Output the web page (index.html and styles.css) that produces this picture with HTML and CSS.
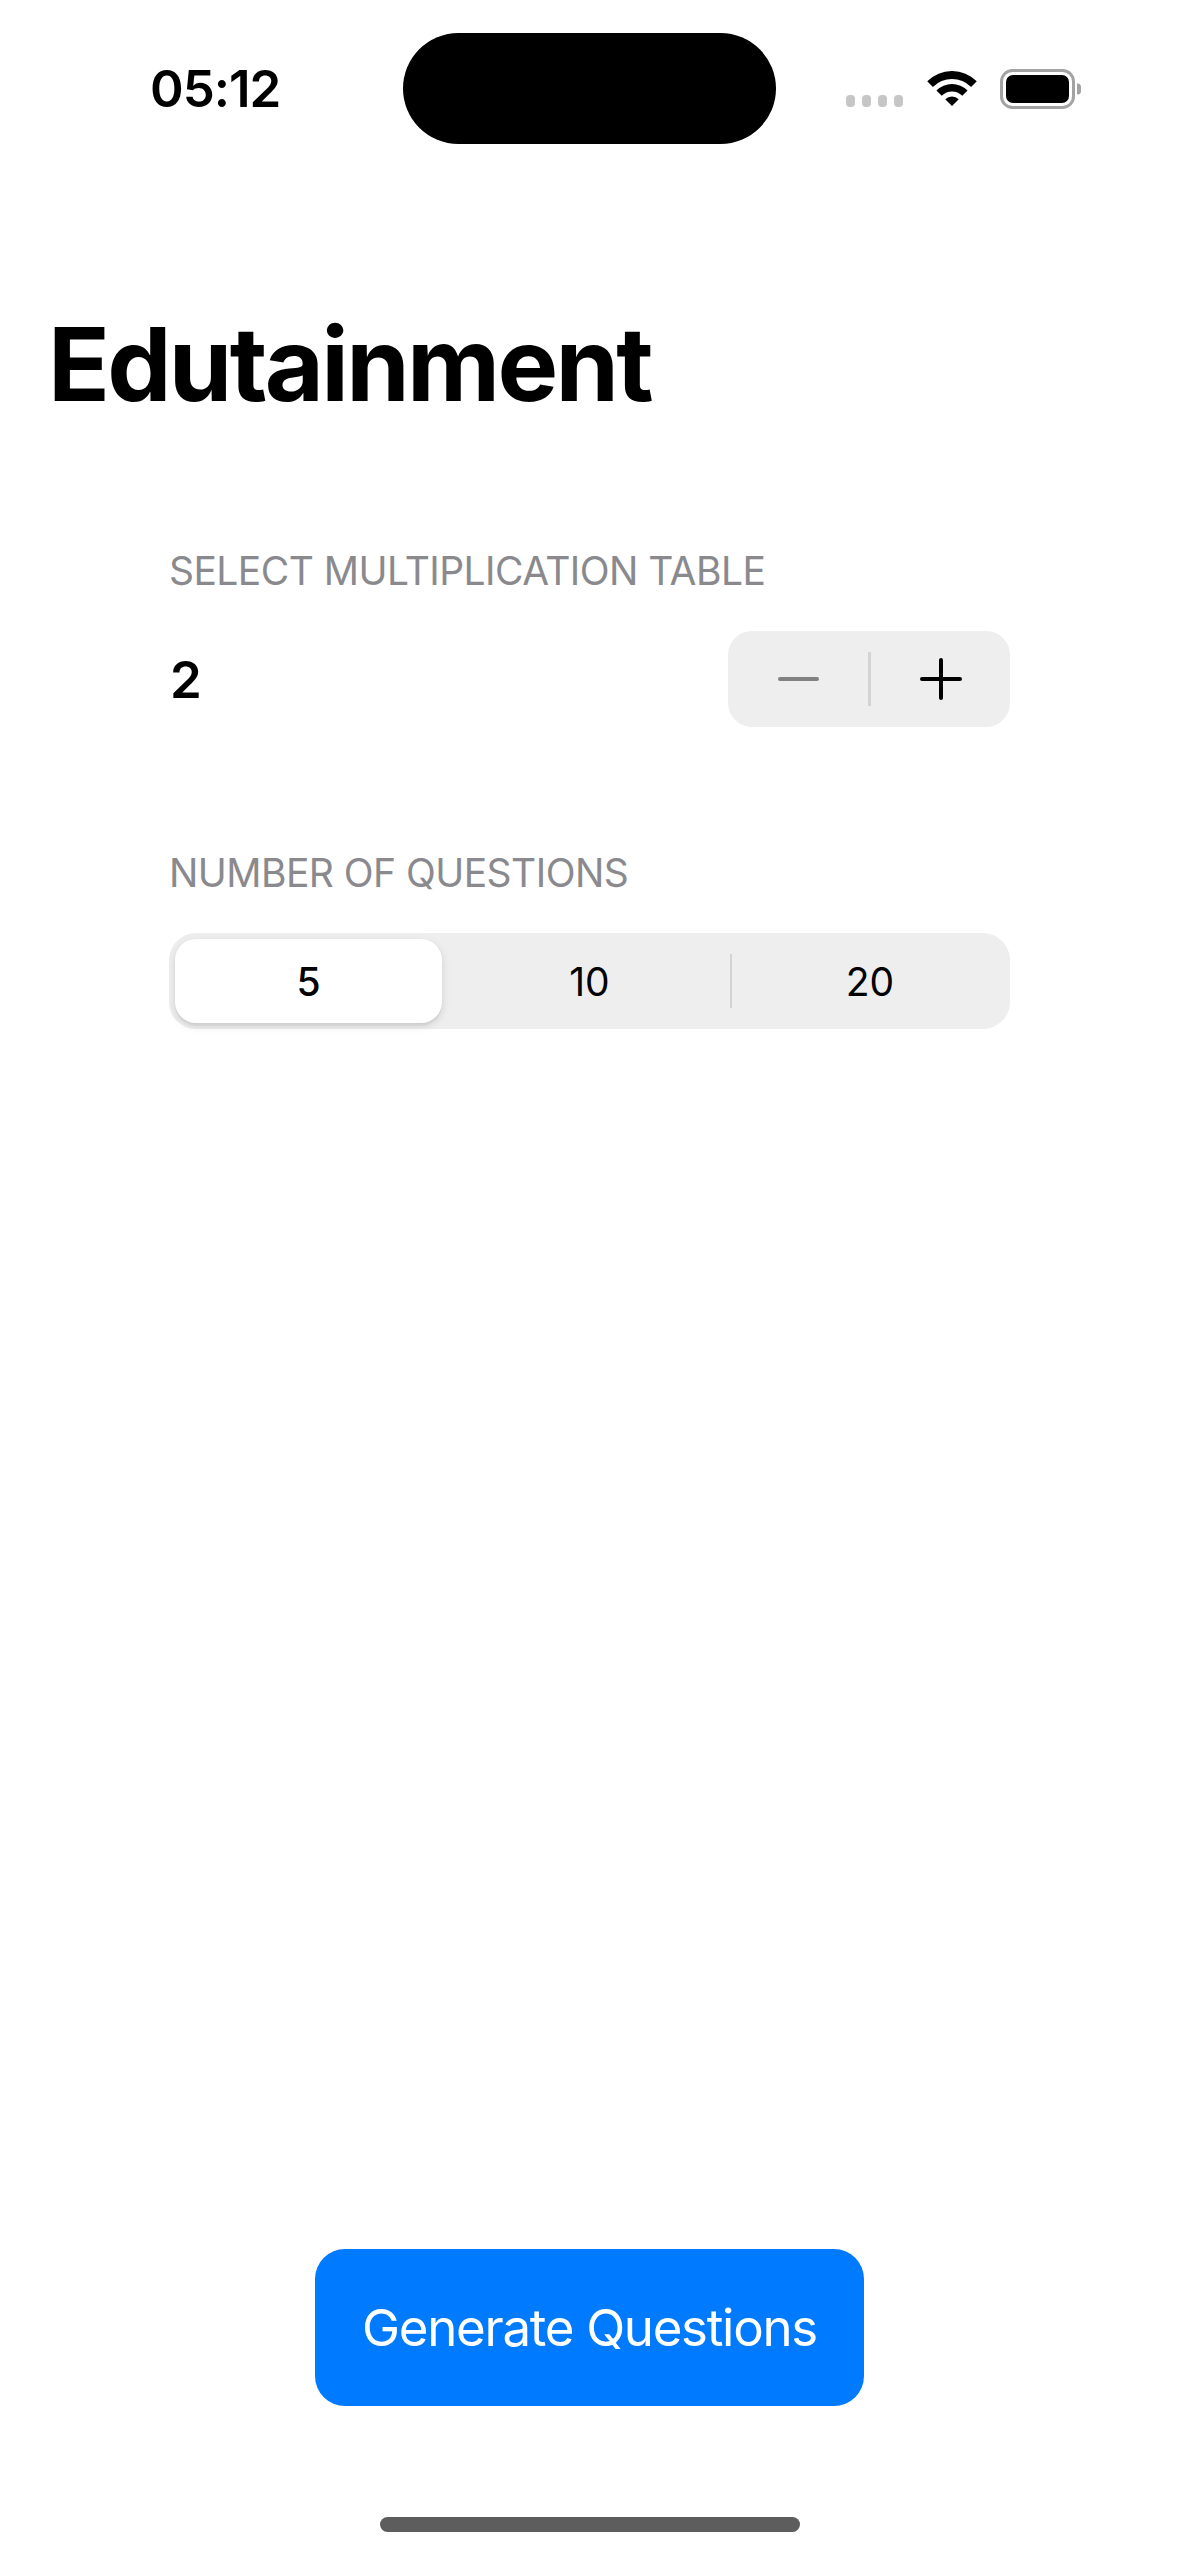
FILE: index.html
```html
<!DOCTYPE html>
<html lang="en">
<head>
<meta charset="utf-8">
<title>Edutainment</title>
<link rel="stylesheet" href="styles.css">
</head>
<body>
<div class="screen">
  <header class="status-bar">
    <div class="sb-left"><span class="time">05:12</span></div>
    <div class="island"></div>
    <div class="sb-right">
      <div class="signal"><i></i><i></i><i></i><i></i></div>
      <svg class="wifi" viewBox="0 0 50 36" aria-hidden="true">
        <path d="M0.25 10.25 A35 35 0 0 1 49.75 10.25 L44.09 15.91 A27 27 0 0 0 5.91 15.91 Z"/>
        <path d="M9.44 19.44 A22 22 0 0 1 40.56 19.44 L35.25 24.75 A14.5 14.5 0 0 0 14.75 24.75 Z"/>
        <path d="M18.28 28.28 A9.5 9.5 0 0 1 31.72 28.28 L25 35 Z"/>
      </svg>
      <svg class="battery" viewBox="0 0 82 40" aria-hidden="true">
        <rect x="1.5" y="1.5" width="72" height="37" rx="11" fill="none" stroke="#a3a3a3" stroke-width="3"/>
        <rect x="6" y="6" width="63" height="28" rx="7" fill="#000"/>
        <path d="M77 14.5 h0.5 a3.5 3.5 0 0 1 3.5 3.5 v4 a3.5 3.5 0 0 1 -3.5 3.5 h-0.5 z" fill="#a3a3a3"/>
      </svg>
    </div>
  </header>

  <h1 class="title">Edutainment</h1>

  <main class="form">
    <section class="group">
      <h2 class="group-header">SELECT MULTIPLICATION TABLE</h2>
      <div class="row">
        <span class="value">2</span>
        <div class="stepper">
          <button class="step step-minus" aria-label="Decrement"><span class="minus-bar"></span></button>
          <button class="step step-plus" aria-label="Increment">
            <svg viewBox="0 0 42 42" class="plus-icon" aria-hidden="true">
              <path d="M21 2 V40 M2 21 H40" stroke="#000" stroke-width="4" stroke-linecap="round" fill="none"/>
            </svg>
          </button>
        </div>
      </div>
    </section>

    <section class="group">
      <h2 class="group-header">NUMBER OF QUESTIONS</h2>
      <div class="segmented">
        <div class="seg seg-selected">5</div>
        <div class="seg">10</div>
        <div class="seg seg-divided">20</div>
      </div>
    </section>
  </main>

  <div class="spacer"></div>

  <div class="actions">
    <button class="primary-button">Generate Questions</button>
  </div>

  <div class="home-indicator"></div>
</div>
</body>
</html>
```

FILE: styles.css
```css
html, body {
  margin: 0;
  padding: 0;
  background: #ffffff;
}

.screen {
  width: 1179px;
  height: 2556px;
  display: flex;
  flex-direction: column;
  background: #ffffff;
  font-family: Inter, "Noto Sans", "Liberation Sans", sans-serif;
  color: #000000;
  overflow: hidden;
}

/* Status bar */
.status-bar {
  display: flex;
  align-items: center;
  height: 111px;
  margin-top: 33px;
  flex-shrink: 0;
}

.sb-left {
  width: 403px;
  padding-left: 150px;
  box-sizing: border-box;
}

.time {
  font-size: 51px;
  font-weight: 600;
  line-height: 1;
  letter-spacing: -1px;
}

.island {
  width: 373px;
  height: 111px;
  border-radius: 56px;
  background: #000000;
  flex-shrink: 0;
}

.sb-right {
  display: flex;
  align-items: center;
  padding-left: 70px;
}

.signal {
  display: flex;
  gap: 7px;
  margin-top: 25px;
}

.signal i {
  display: block;
  width: 9px;
  height: 12px;
  border-radius: 4px;
  background: #c6c6c6;
}

.wifi {
  width: 50px;
  height: 36px;
  margin-left: 24px;
  fill: #000000;
}

.battery {
  width: 82px;
  height: 40px;
  margin-left: 23px;
}

/* Title */
.title {
  margin: 159px 0 0 0;
  padding-left: 48px;
  font-size: 102px;
  line-height: 122px;
  font-weight: 700;
  letter-spacing: -2.7px;
}

/* Form */
.form {
  width: 841px;
  margin: 122px auto 0;
  display: flex;
  flex-direction: column;
  gap: 122px;
}

.group-header {
  margin: 0 0 36px;
  font-size: 39px;
  line-height: 48px;
  font-weight: 400;
  color: #8a8a8e;
  letter-spacing: -0.55px;
}

.row {
  display: flex;
  align-items: center;
  justify-content: space-between;
  height: 96px;
}

.value {
  font-size: 51px;
  font-weight: 600;
  padding-left: 1px;
}

.stepper {
  display: grid;
  grid-template-columns: 140px 142px;
  width: 282px;
  height: 96px;
  border-radius: 24px;
  background: #eeeeef;
  overflow: hidden;
}

.step {
  display: flex;
  align-items: center;
  justify-content: center;
  border: none;
  padding: 0;
  margin: 0;
  background: transparent;
  cursor: pointer;
}

.step-plus {
  background: linear-gradient(#d4d4d6, #d4d4d6) left center / 3px 54px no-repeat;
  padding-left: 3px;
}

.minus-bar {
  display: block;
  width: 41px;
  height: 4px;
  border-radius: 2px;
  background: #818181;
}

.plus-icon {
  width: 42px;
  height: 42px;
}

/* Segmented control */
.segmented {
  display: grid;
  grid-template-columns: repeat(3, 1fr);
  height: 96px;
  border-radius: 27px;
  background: #eeeeef;
}

.seg {
  display: flex;
  align-items: center;
  justify-content: center;
  font-size: 39px;
  font-weight: 400;
  color: #000000;
}

.seg-selected {
  margin: 6px 7px 6px 6px;
  background: #ffffff;
  border-radius: 21px;
  font-weight: 500;
  box-shadow: 0 3px 8px rgba(0, 0, 0, 0.12), 0 3px 1px rgba(0, 0, 0, 0.04);
}

.seg-divided {
  background: linear-gradient(#d3d3d6, #d3d3d6) left center / 2px 54px no-repeat;
}

/* Bottom */
.spacer {
  flex: 1;
}

.actions {
  display: flex;
  justify-content: center;
  flex-shrink: 0;
}

.primary-button {
  width: 549px;
  height: 157px;
  border: none;
  border-radius: 30px;
  background: #007aff;
  color: #ffffff;
  font-family: Inter, "Noto Sans", "Liberation Sans", sans-serif;
  font-size: 51px;
  font-weight: 400;
  letter-spacing: -1.3px;
  padding: 0;
  cursor: pointer;
}

.home-indicator {
  align-self: center;
  width: 420px;
  height: 15px;
  margin: 111px 0 24px;
  border-radius: 8px;
  background: #5d5d5d;
  flex-shrink: 0;
}
```
